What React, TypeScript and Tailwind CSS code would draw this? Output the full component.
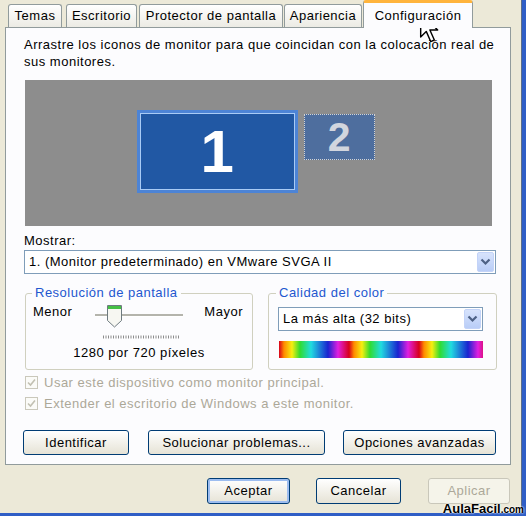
import React from "react";

const tabs = [
    { label: "Temas", cls: "ml-[8px] w-[54px]" },
    { label: "Escritorio", cls: "ml-[4px] w-[71px]" },
    { label: "Protector de pantalla", cls: "ml-[2px] w-[144px]" },
    { label: "Apariencia", cls: "ml-[1px] w-[78px]" },
];

function Chevron() {
    return (
        <span className="flex items-center justify-center w-[17px] h-[20px] mr-[1px] rounded-[2px] bg-gradient-to-b from-[#D7E3FC] to-[#B9CDF7] border border-[#C3D3F8]">
            <svg width="11" height="8" viewBox="0 0 11 8">
                <path d="M1.5 1.5 L5.5 5.5 L9.5 1.5" fill="none" stroke="#4D6185" strokeWidth="2.2" />
            </svg>
        </span>
    );
}

function Select({ text, className }: { text: string; className: string }) {
    return (
        <div className={`flex items-center justify-between bg-white border border-[#7F9DB9] ${className}`}>
            <span className="pl-[4px] text-[13px] text-black whitespace-nowrap">{text}</span>
            <Chevron />
        </div>
    );
}

function XpButton({ label, className, isDefault, disabled }: { label: string; className: string; isDefault?: boolean; disabled?: boolean }) {
    return (
        <button
            className={`flex items-center justify-center rounded-[3px] border text-[13px] tracking-[0.5px] ${
                disabled
                    ? "border-[#C9C7BA] bg-[#F5F4EA] text-[#ACA899]"
                    : "border-[#003C74] bg-gradient-to-b from-white to-[#E6E3D6] text-black"
            } ${isDefault ? "shadow-[inset_0_0_0_2px_#9DBDF0]" : ""} ${className}`}
        >
            {label}
        </button>
    );
}

function DisabledCheck({ label }: { label: string }) {
    return (
        <div className="flex items-center h-[21px] ml-[1px]">
            <span className="flex items-center justify-center w-[13px] h-[13px] border border-[#CAC8BB] bg-[#FBFBF8]">
                <svg width="9" height="9" viewBox="0 0 9 9">
                    <path d="M1 4.5 L3.5 7 L8 1.5" fill="none" stroke="#C2C0B2" strokeWidth="1.6" />
                </svg>
            </span>
            <span className="ml-[6px] text-[13px] text-[#ACA899]">{label}</span>
        </div>
    );
}

export default function App() {
    return (
        <div className="relative w-[526px] h-[516px] overflow-hidden bg-[#2F5EC6] font-['Liberation_Sans',Arial,sans-serif] tracking-[0.5px]">
            <div className="w-[522px] h-[513px] bg-[#ECE9D8] border-r border-[#5B6D8A]">
                {/* Tabs */}
                <div className="flex items-end h-[27px]">
                    {tabs.map((t) => (
                        <div
                            key={t.label}
                            className={`flex items-center justify-center h-[23px] rounded-t-[3px] border border-b-0 border-[#919B9C] bg-gradient-to-b from-white to-[#ECEBE4] text-[13px] text-black ${t.cls}`}
                        >
                            {t.label}
                        </div>
                    ))}
                    <div className="relative z-10 ml-[1px] mb-[-1px] flex justify-center w-[110px] h-[28px] rounded-t-[3px] border border-b-0 border-[#919B9C] border-t-[3px] border-t-[#FFB43C] bg-[#FCFCFE] text-[13px] text-black pt-[3px]">
                        Configuración
                    </div>
                </div>

                {/* Panel */}
                <div className="ml-[5px] w-[506px] h-[438px] border border-[#919B9C] bg-[#FCFCFE] pl-[18px] pt-[8px]">
                    <p className="w-[472px] text-[13px] leading-[17px] text-black">
                        Arrastre los iconos de monitor para que coincidan con la colocación real de sus monitores.
                    </p>

                    <div className="relative mt-[10px] ml-[1px] w-[467px] h-[146px] bg-[#8D8D8D]">
                        <div className="absolute left-[112px] top-[30px] w-[161px] h-[83px] bg-[#4D84D6] p-[3px]">
                            <div className="flex items-center justify-center w-full h-full border border-[#A9CBF5] bg-[#2158A4] text-[60px] font-bold leading-none text-white">
                                1
                            </div>
                        </div>
                        <div className="absolute left-[279px] top-[34px] flex items-center justify-center w-[71px] h-[46px] border border-dotted border-[#D4D4D4] bg-[#4E6E9E] text-[41px] font-bold leading-none text-[#D2D6DE]">
                            2
                        </div>
                    </div>

                    <div className="mt-[7px] h-[16px] text-[13px] leading-[16px] text-black">Mostrar:</div>
                    <Select text="1. (Monitor predeterminado) en VMware SVGA II" className="mt-[1px] w-[472px] h-[24px]" />

                    <div className="flex mt-[11px] ml-[1px]">
                        <fieldset className="w-[228px] h-[85px] rounded-[3px] border border-[#D0D0BF]">
                            <legend className="ml-[6px] px-[3px] text-[13px] leading-[16px] text-[#2357CF]">Resolución de pantalla</legend>
                            <div className="flex justify-between pl-[7px] pr-[9px] h-[40px]">
                                <span className="text-[13px] leading-[22px] text-black">Menor</span>
                                <svg width="96" height="40" viewBox="0 0 96 40">
                                    <rect x="5" y="13" width="88" height="2" fill="#B4B4AC" />
                                    <rect x="5" y="15" width="88" height="1" fill="#FFFFFF" />
                                    <path d="M17.5 4.5 h14 v15 l-7 6.5 l-7 -6.5 z" fill="#F7F7F2" stroke="#6E7A80" />
                                    <rect x="18" y="5" width="13" height="3" fill="#45C045" />
                                    <line x1="13" y1="36" x2="90" y2="36" stroke="#8C8C8C" strokeWidth="3" strokeDasharray="1 1.5" />
                                </svg>
                                <span className="text-[13px] leading-[22px] text-black">Mayor</span>
                            </div>
                            <div className="mt-[4px] text-center text-[13px] leading-[16px] text-black">1280 por 720 píxeles</div>
                        </fieldset>

                        <fieldset className="ml-[15px] w-[229px] h-[85px] rounded-[3px] border border-[#D0D0BF]">
                            <legend className="ml-[7px] px-[3px] text-[13px] leading-[16px] text-[#2357CF]">Calidad del color</legend>
                            <Select text="La más alta (32 bits)" className="mt-[6px] ml-[9px] w-[205px] h-[24px]" />
                            <div className="mt-[10px] ml-[10px] w-[204px] h-[17px] bg-[repeating-linear-gradient(90deg,#D8001C_0px,#FF8A00_5px,#F6EE10_13px,#30DC30_21px,#20DCE0_32px,#1A24D0_49px,#E020E0_59px,#D8001C_70px)]" />
                        </fieldset>
                    </div>

                    <div className="mt-[2px]">
                        <DisabledCheck label="Usar este dispositivo como monitor principal." />
                        <DisabledCheck label="Extender el escritorio de Windows a este monitor." />
                    </div>

                    <div className="flex mt-[16px] ml-[-1px]">
                        <XpButton label="Identificar" className="w-[106px] h-[25px]" />
                        <XpButton label="Solucionar problemas..." className="ml-[19px] w-[177px] h-[25px]" />
                        <XpButton label="Opciones avanzadas" className="ml-[18px] w-[153px] h-[25px]" />
                    </div>
                </div>

                {/* Dialog buttons */}
                <div className="flex mt-[13px] ml-[207px]">
                    <XpButton label="Aceptar" className="w-[83px] h-[26px]" isDefault />
                    <XpButton label="Cancelar" className="ml-[26px] w-[85px] h-[26px]" />
                    <XpButton label="Aplicar" className="ml-[27px] w-[82px] h-[26px]" disabled />
                </div>
            </div>

            {/* Watermark */}
            <div className="absolute right-[2px] bottom-[0px] font-bold text-black leading-none tracking-normal [text-shadow:0_0_2px_#fff,0_0_2px_#fff]">
                <span className="text-[13px]">AulaFacil</span>
                <span className="text-[10px]">.com</span>
            </div>

            {/* Mouse cursor */}
            <svg className="absolute left-[419px] top-[12px]" width="21" height="31" viewBox="0 0 12.5 19.5">
                <path d="M0.7 0.7 L0.7 15.7 L4.2 12.2 L7 18.6 L9.3 17.6 L6.5 11.3 L11.4 11.3 Z" fill="#FFFFFF" stroke="#000000" strokeWidth="0.9" strokeLinejoin="round" />
            </svg>
        </div>
    );
}
